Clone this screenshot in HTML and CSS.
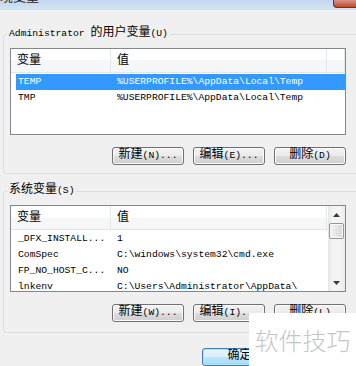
FILE: index.html
```html
<!DOCTYPE html>
<html lang="zh-CN">
<head>
  <meta charset="UTF-8">
  <title>环境变量</title>
  <link rel="stylesheet" href="styles.css">
</head>
<body>
<div class="window">

  <div class="titlebar">
    <span class="title">环境变量</span>
    <span class="close"></span>
  </div>

  <div class="client">

    <!-- 用户变量 -->
    <fieldset class="group">
      <legend>Administrator <span class="cn">的用户变量</span>(U)</legend>
      <div class="list">
        <div class="table">
          <div class="head">
            <span><span class="cn">变量</span></span>
            <span><span class="cn">值</span></span>
            <span></span>
          </div>
          <div class="rows">
            <div class="row selected"><span>TEMP</span><span>%USERPROFILE%\AppData\Local\Temp</span></div>
            <div class="row"><span>TMP</span><span>%USERPROFILE%\AppData\Local\Temp</span></div>
          </div>
        </div>
      </div>
      <div class="buttons">
        <button class="btn"><span class="cn">新建</span>(N)...</button>
        <button class="btn"><span class="cn">编辑</span>(E)...</button>
        <button class="btn"><span class="cn">删除</span>(D)</button>
      </div>
    </fieldset>

    <!-- 系统变量 -->
    <fieldset class="group group-sys">
      <legend><span class="cn">系统变量</span>(S)</legend>
      <div class="list">
        <div class="table">
          <div class="head">
            <span><span class="cn">变量</span></span>
            <span><span class="cn">值</span></span>
            <span></span>
          </div>
          <div class="rows">
            <div class="row"><span>_DFX_INSTALL...</span><span>1</span></div>
            <div class="row"><span>ComSpec</span><span>C:\windows\system32\cmd.exe</span></div>
            <div class="row"><span>FP_NO_HOST_C...</span><span>NO</span></div>
            <div class="row"><span>lnkenv</span><span>C:\Users\Administrator\AppData\</span></div>
          </div>
        </div>
        <div class="scrollbar">
          <div class="arrow">
            <svg width="7" height="4" viewBox="0 0 7 4"><path d="M0 4L3.5 0L7 4Z" fill="#3b3b3b"/></svg>
          </div>
          <div class="thumb"></div>
          <div class="track"></div>
          <div class="arrow">
            <svg width="7" height="4" viewBox="0 0 7 4"><path d="M0 0L3.5 4L7 0Z" fill="#3b3b3b"/></svg>
          </div>
        </div>
      </div>
      <div class="buttons">
        <button class="btn"><span class="cn">新建</span>(W)...</button>
        <button class="btn"><span class="cn">编辑</span>(I)...</button>
        <button class="btn"><span class="cn">删除</span>(L)</button>
      </div>
    </fieldset>

    <div class="footer">
      <button class="btn btn-default"><span class="cn">确定</span></button>
    </div>

  </div>

  <div class="watermark">软件技巧</div>
</div>
</body>
</html>
```

FILE: styles.css
```css
body {
  margin: 0;
  background: #f0f0f0;
  font-family: "Liberation Mono", "Noto Sans CJK SC", monospace;
  font-size: 9.7px;
  color: #000;
  overflow: hidden;
}

.window {
  position: relative;
  width: 356px;
  height: 366px;
  overflow: hidden;
}

.cn {
  font-family: "Noto Sans CJK SC", sans-serif;
  font-size: 12px;
  line-height: 8px;
}

/* 标题栏 */
.titlebar {
  height: 10px;
  display: flex;
  justify-content: space-between;
  align-items: flex-start;
  background: linear-gradient(#c3d7ee, #d4e3f3);
  overflow: hidden;
}

.title {
  font-family: "Noto Sans CJK SC", sans-serif;
  font-size: 13px;
  line-height: 16px;
  margin: -12px 0 0 -13px;
  color: #1e1e1e;
}

.close {
  width: 42px;
  height: 7px;
  margin-right: -21px;
  background: linear-gradient(#dc9484, #c2472f);
  border: 1px solid #6f2f25;
  border-top: none;
  border-radius: 0 0 4px 4px;
}

.client {
  padding: 17px 0 0 3px;
}

/* 分组框 */
.group {
  margin: 0;
  padding: 7px 0 8px 6px;
  width: 360px;
  border: 1px solid #d5dfe5;
  border-radius: 3px;
}

.group-sys {
  margin-top: 10px;
  padding-bottom: 10px;
}

.group legend {
  margin-left: -3px;
  padding: 0 2px;
  line-height: 14px;
}

/* 列表 */
.list {
  width: 334px;
  height: 85px;
  border: 1px solid #828790;
  background: #fff;
  display: flex;
  overflow: hidden;
}

.table {
  flex: 1;
  overflow: hidden;
}

.head {
  display: grid;
  grid-template-columns: 100px 216px 1fr;
  height: 23px;
  line-height: 25px;
  border-bottom: 1px solid #e5e5e5;
  background: linear-gradient(#fff 50%, #f6f7f9 50%);
}

.head > span {
  padding-left: 6px;
  border-right: 1px solid #e3e8ee;
}

.rows {
  padding: 1px 0 0 5px;
}

.row {
  display: grid;
  grid-template-columns: 99px 211px;
  height: 16px;
  line-height: 16px;
}

.row span {
  padding-left: 2px;
  white-space: nowrap;
  overflow: hidden;
}

.row.selected {
  background: #3399ff;
  color: #fff;
}

/* 滚动条 */
.scrollbar {
  width: 17px;
  flex: none;
  display: flex;
  flex-direction: column;
  align-items: center;
  background: linear-gradient(90deg, #e6e6e6, #f4f4f4 25%, #f4f4f4 75%, #e9e9e9);
}

.arrow {
  height: 17px;
  display: flex;
  align-items: center;
  justify-content: center;
}

.thumb {
  width: 13px;
  height: 14px;
  border: 1px solid #959595;
  border-radius: 2px;
  background: linear-gradient(90deg, #f4f4f4, #e6e6e6 50%, #d6d6d6);
  box-shadow: inset 0 0 0 1px #fbfbfb;
}

.track {
  flex: 1;
}

/* 按钮 */
.buttons {
  width: 336px;
  display: flex;
  justify-content: flex-end;
  gap: 9px;
  margin-top: 12px;
}

.btn {
  width: 72px;
  height: 18px;
  box-sizing: border-box;
  padding: 0;
  border: 1px solid #707070;
  border-radius: 3px;
  background: linear-gradient(#f2f2f2, #ebebeb 50%, #dddddd 50%, #cfcfcf);
  box-shadow: inset 0 0 0 1px #fcfcfc;
  font: inherit;
  line-height: 16px;
  color: #000;
}

.footer {
  display: flex;
  margin-top: 15px;
  padding-left: 199px;
}

.btn-default {
  width: 75px;
  border-color: #3c7fb1;
  background: linear-gradient(#e8f5fc, #d9effb 50%, #bee6fd 50%, #a7d9f5);
  box-shadow: inset 0 0 0 1px #b8e0f6;
}

/* 水印 */
.watermark {
  position: absolute;
  right: 0;
  bottom: 0;
  width: 107px;
  height: 53px;
  background: #fff;
  color: #c6c6c6;
  font-family: "Noto Sans CJK SC", sans-serif;
  font-size: 24px;
  font-weight: 300;
  display: flex;
  align-items: center;
  justify-content: center;
}
```
